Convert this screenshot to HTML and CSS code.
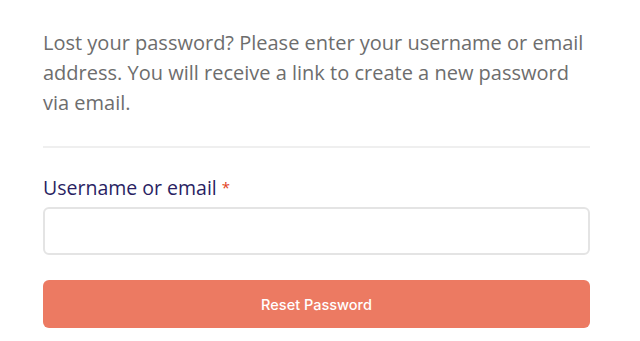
FILE: index.html
```html
<!DOCTYPE html>
<html>
<head>
<meta charset="utf-8">
<link rel="stylesheet" href="styles.css">
</head>
<body>
<form class="reset-form">
  <p class="intro">Lost your password? Please enter your username or email address. You will receive a link to create a new password via email.</p>
  <hr class="divider">
  <label class="field-label" for="user">Username or email <span class="required">*</span></label>
  <input class="text-input" id="user" type="text">
  <button class="submit-btn" type="button">Reset Password</button>
</form>
</body>
</html>
```
FILE: styles.css
```css
html, body {
  margin: 0;
  padding: 0;
  background: #ffffff;
}
.reset-form {
  padding: 28px 50px 0 43px;
  display: flex;
  flex-direction: column;
  font-family: "Open Sans", "Liberation Sans", sans-serif;
}
.intro {
  margin: 0;
  font-size: 20px;
  line-height: 30px;
  color: #6d6d6d;
}
.divider {
  margin: 28px 0 0;
  border: 0;
  height: 2px;
  background: #efefef;
}
.field-label {
  margin-top: 26px;
  font-size: 19.5px;
  line-height: 26px;
  color: #2a1f63;
}
.required {
  color: #e2401c;
  font-size: 15px;
  vertical-align: 2px;
}
.text-input {
  margin-top: 6px;
  box-sizing: border-box;
  height: 48px;
  border: 2px solid #e4e4e4;
  border-radius: 6px;
  background: #fff;
}
.submit-btn {
  margin-top: 25px;
  height: 48px;
  border: 0;
  border-radius: 6px;
  background: #ec7a62;
  color: #ffffff;
  font-family: Inter, Roboto, sans-serif;
  font-size: 14.5px;
  font-weight: 500;
}
```
